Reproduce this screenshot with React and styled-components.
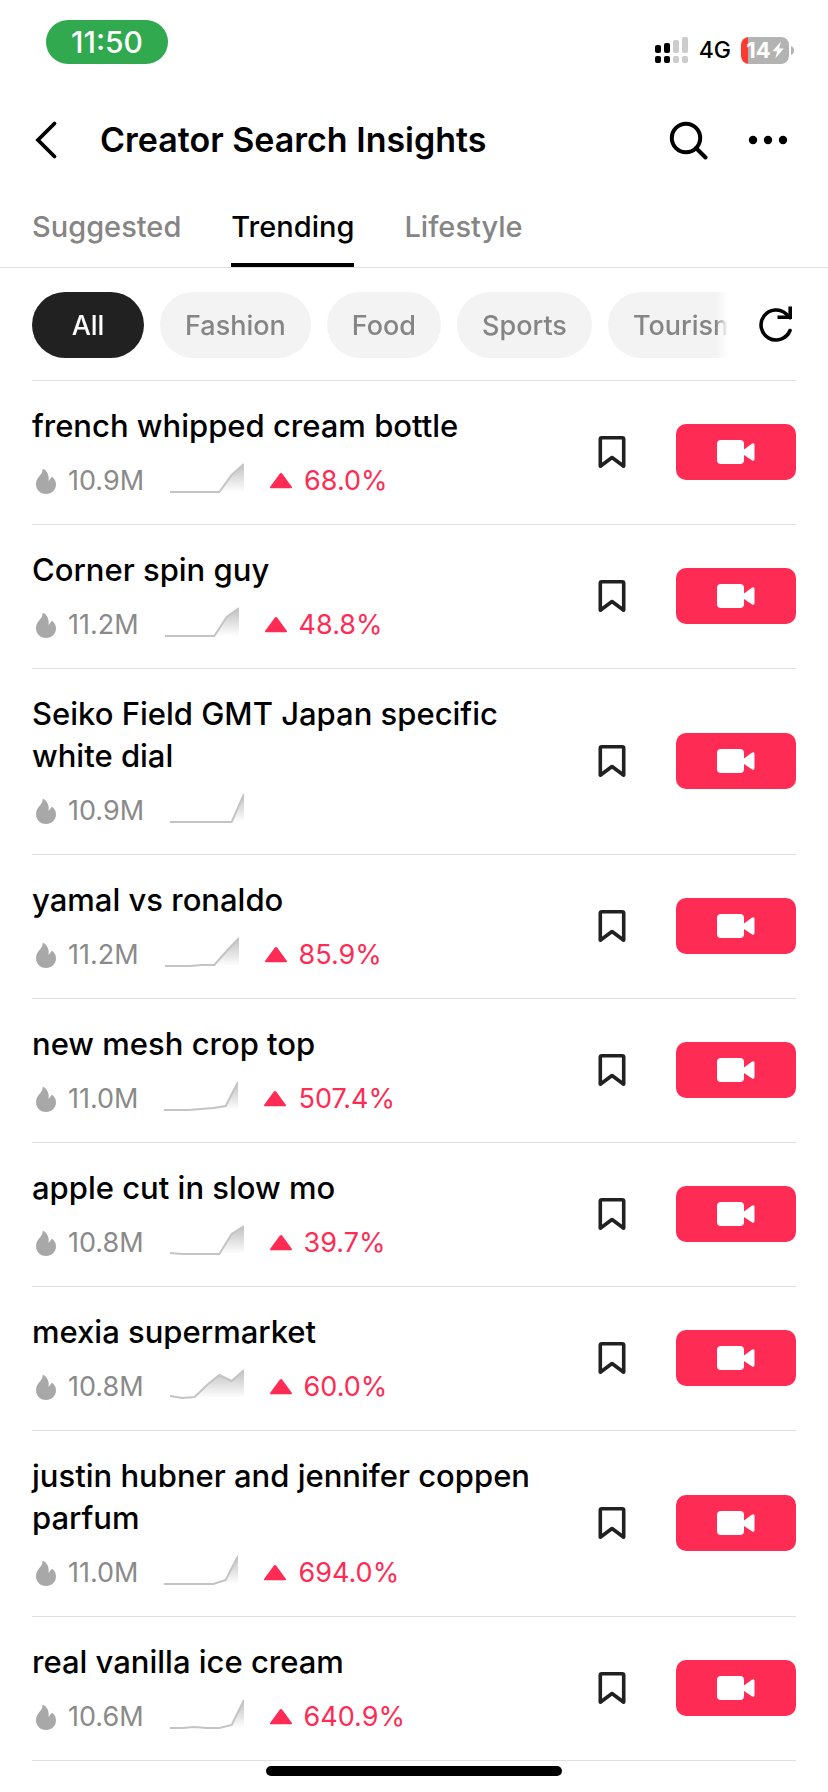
import React, { useId } from "react";
import styled, { createGlobalStyle } from "styled-components";

const GlobalStyle = createGlobalStyle`
  *, *::before, *::after { box-sizing: border-box; }
  body {
    margin: 0;
    background: #fff;
    color: #000;
    font-family: Inter, "Liberation Sans", sans-serif;
  }
  button { font: inherit; color: inherit; border: 0; background: none; padding: 0; cursor: pointer; }
  svg { display: block; flex: none; }
`;

const Page = styled.div`
  min-height: 100vh;
  background: #fff;
`;

const StatusBar = styled.div`
  display: flex;
  justify-content: space-between;
  align-items: flex-start;
  height: 96px;
  padding: 20px 34px 0 46px;
`;

const Clock = styled.time`
  width: 122px;
  height: 44px;
  border-radius: 22px;
  background: #30a94f;
  color: #fff;
  font-size: 30px;
  font-weight: 500;
  line-height: 44px;
  text-align: center;
`;

const StatusIcons = styled.div`
  display: flex;
  align-items: center;
  gap: 10px;
  height: 28px;
  margin-top: 16px;
`;

const Network = styled.span`
  font-size: 23px;
  font-weight: 500;
  line-height: 28px;
`;

const Battery = styled.div`
  display: flex;
  align-items: center;
  gap: 2px;
`;

const BatteryBody = styled.div`
  display: flex;
  align-items: center;
  justify-content: center;
  gap: 1px;
  width: 48px;
  height: 27px;
  border-radius: 8px;
  background: linear-gradient(to right, #ff3b30 7px, #b3b3b3 7px);
  color: #fff;
  font-size: 22px;
  font-weight: 700;
  line-height: 27px;
`;

const Header = styled.header`
  display: flex;
  align-items: center;
  height: 88px;
  padding: 0 40px 0 32px;
`;

const IconButton = styled.button`
  display: flex;
  align-items: center;
  justify-content: center;
  flex: none;
  width: ${(p) => p.$size}px;
  height: ${(p) => p.$size}px;
`;

const Title = styled.h1`
  flex: 1;
  margin: 0 0 0 40px;
  font-size: 34px;
  font-weight: 600;
  line-height: 44px;
`;

const HeaderActions = styled.div`
  display: flex;
  gap: 40px;
`;

const Tabs = styled.nav`
  display: flex;
  gap: 50px;
  height: 84px;
  padding: 0 32px;
  border-bottom: 1px solid #e0e0e0;
`;

const Tab = styled.button`
  height: 83px;
  padding-top: 6px;
  border-bottom: 4px solid ${(p) => (p.$active ? "#000" : "transparent")};
  color: ${(p) => (p.$active ? "#000" : "#858585")};
  font-size: 29px;
  font-weight: 500;
`;

const FilterBar = styled.div`
  display: flex;
  align-items: center;
  margin: 0 32px;
  height: 113px;
  padding-top: 2px;
  border-bottom: 1px solid #e0e0e0;
`;

const Chips = styled.div`
  display: flex;
  flex: 1;
  gap: 16px;
  min-width: 0;
  overflow: hidden;
  mask-image: linear-gradient(to right, #000 calc(100% - 12px), transparent);
`;

const Chip = styled.button`
  flex: none;
  min-width: 112px;
  height: 66px;
  padding: 0 25px;
  border-radius: 33px;
  background: ${(p) => (p.$active ? "#212121" : "#f3f3f3")};
  color: ${(p) => (p.$active ? "#fff" : "#858585")};
  font-size: 27px;
  font-weight: 500;
`;

const Refresh = styled(IconButton)`
  margin-left: 28px;
`;

const List = styled.ul`
  list-style: none;
  margin: 0;
  padding: 0 32px;
`;

const Row = styled.li`
  display: flex;
  align-items: center;
  padding: 24px 0 25px;
  border-bottom: 1px solid #e0e0e0;
`;

const Info = styled.div`
  flex: 1;
  min-width: 0;
  padding-right: 40px;
`;

const Term = styled.h2`
  margin: 0;
  font-size: 31px;
  font-weight: 500;
  line-height: 42px;
`;

const Meta = styled.div`
  display: flex;
  align-items: center;
  height: 36px;
  margin-top: 16px;
  padding-left: 4px;
  font-size: 27px;
  line-height: 36px;
`;

const Volume = styled.span`
  margin: 0 26px 0 12px;
  color: #8a8a8a;
`;

const Growth = styled.span`
  display: flex;
  align-items: center;
  gap: 12px;
  margin-left: 26px;
  color: #fe2c55;
`;

const RecordButton = styled.button`
  display: flex;
  align-items: center;
  justify-content: center;
  flex: none;
  width: 120px;
  height: 56px;
  margin-left: 40px;
  border-radius: 10px;
  background: #fe2c55;
`;

const HomeIndicator = styled.div`
  position: fixed;
  bottom: 16px;
  left: 50%;
  width: 296px;
  height: 10px;
  margin-left: -148px;
  border-radius: 5px;
  background: #000;
`;

const signalBars = [
  { top: 8, on: true },
  { top: 6, on: true },
  { top: 3, on: false },
  { top: 0, on: false },
];

const Signal = () => (
  <svg width="34" height="27" viewBox="0 0 34 27" aria-hidden="true">
    {signalBars.map(({ top, on }, i) => (
      <g key={i} fill={on ? "#000" : "#ccc"}>
        <rect x={i * 9} y={top} width="6" height={16 - top} rx="2" />
        <rect x={i * 9} y="19" width="6" height="7" rx="2" />
      </g>
    ))}
  </svg>
);

const Bolt = () => (
  <svg width="12" height="18" viewBox="0 0 12 18" aria-hidden="true">
    <path d="M9 0.5 0.5 10.2h4.7L3.2 17.5 11.7 7.4H7z" fill="#fff" />
  </svg>
);

const BatteryTip = () => (
  <svg width="3" height="9" viewBox="0 0 3 9" aria-hidden="true">
    <path d="M0 0c4 1.500 4 7.500 0 9z" fill="#b3b3b3" />
  </svg>
);

const BackIcon = () => (
  <svg width="28" height="40" viewBox="0 0 28 40" fill="none" stroke="#000" strokeWidth="3.800" aria-hidden="true">
    <path d="M22.500 3.500 6 20l16.500 16.500" strokeLinecap="round" />
  </svg>
);

const SearchIcon = () => (
  <svg width="40" height="40" viewBox="0 0 40 40" fill="none" stroke="#000" strokeWidth="4" aria-hidden="true">
    <circle cx="18" cy="18" r="14.200" />
    <path d="M28 28l9.500 9.500" strokeLinecap="round" />
  </svg>
);

const MoreIcon = () => (
  <svg width="40" height="40" viewBox="0 0 40 40" aria-hidden="true">
    <circle cx="5" cy="20" r="4.200" />
    <circle cx="20" cy="20" r="4.200" />
    <circle cx="35" cy="20" r="4.200" />
  </svg>
);

const RefreshIcon = () => (
  <svg width="40" height="40" viewBox="0 0 40 40" fill="none" stroke="#000" strokeWidth="3.600" aria-hidden="true">
    <path d="M34 25.500A15 15 0 1 1 30.500 9.200l3.500 3.500" strokeLinecap="round" />
    <path d="M34.200 1.500v10.800H21.500" />
  </svg>
);

const Flame = () => (
  <svg width="20" height="25" viewBox="0 0 20 25" fill="#a8a8a8" aria-hidden="true">
    <path d="M7.300 0c-.6 0-.9.400-.8 1C7 5.200 0 8 0 15.300 0 21 4.400 25 10 25s10-4 10-9.700c0-2.800-1.200-5.200-3-6.900-.6-.6-1.200-.5-1.700 0L12.500 12C13.400 6.500 11.200 1.800 7.300 0z" />
  </svg>
);

const Triangle = () => (
  <svg width="22" height="16" viewBox="0 0 22 16" fill="#fe2c55" aria-hidden="true">
    <path d="M9.700.7 .4 13.500C-.4 14.700 0 15.300 1.200 15.300h19.600c1.200 0 1.600-.6.8-1.800L12.300.7c-.7-.9-1.900-.9-2.600 0z" />
  </svg>
);

const BookmarkIcon = () => (
  <svg width="32" height="36" viewBox="0 0 32 36" fill="none" stroke="#212121" strokeWidth="3.600" strokeLinejoin="round" aria-hidden="true">
    <path d="M4.300 5.300q0-1.500 1.500-1.500h20.400q1.500 0 1.500 1.500v26.900L16 23.500 4.300 32.200z" />
  </svg>
);

const CameraIcon = () => (
  <svg width="38" height="24" viewBox="0 0 38 24" fill="#fff" aria-hidden="true">
    <rect width="27" height="24" rx="4" />
    <path d="M27 9.500 34.800 3.800Q37.500 2.200 37.500 5v14q0 2.800-2.700 1.200L27 15z" />
  </svg>
);

/* Seven-point trend line; values are heights above the baseline. */
const Sparkline = ({ values }) => {
  const id = useId();
  const points = values.map((v, i) => `${(i * 74) / (values.length - 1)},${29 - v}`);
  return (
    <svg width="74" height="36" viewBox="0 0 74 36" aria-hidden="true">
      <defs>
        <linearGradient id={id} x1="0" y1="0" x2="0" y2="29" gradientUnits="userSpaceOnUse">
          <stop offset="0" stopColor="#bdbdbd" />
          <stop offset="1" stopColor="#bdbdbd" stopOpacity="0" />
        </linearGradient>
      </defs>
      <polygon points={`0,29 ${points.join(" ")} 74,29`} fill={`url(#${id})`} />
      <polyline points={points.join(" ")} fill="none" stroke="#c4c4c4" strokeWidth="2" />
    </svg>
  );
};

const tabs = ["Suggested", "Trending", "Lifestyle"];
const chips = ["All", "Fashion", "Food", "Sports", "Tourism"];
const trends = [
  { term: "french whipped cream bottle", volume: "10.9M", growth: "68.0%", values: [0, 0, 0, 0, 0, 17, 28] },
  { term: "Corner spin guy", volume: "11.2M", growth: "48.8%", values: [0, 0, 0, 0, 0, 19, 28] },
  { term: "Seiko Field GMT Japan specific white dial", volume: "10.9M", values: [0, 0, 0, 0, 0, 0, 28] },
  { term: "yamal vs ronaldo", volume: "11.2M", growth: "85.9%", values: [0, 0, 0, 1, 1, 15, 28] },
  { term: "new mesh crop top", volume: "11.0M", growth: "507.4%", values: [0, 0, 0, 1, 2, 4, 28] },
  { term: "apple cut in slow mo", volume: "10.8M", growth: "39.7%", values: [1, 0, 0, 0, 0, 20, 28] },
  { term: "mexia supermarket", volume: "10.8M", growth: "60.0%", values: [2, 0, 1, 13, 23, 17, 28] },
  { term: "justin hubner and jennifer coppen parfum", volume: "11.0M", growth: "694.0%", values: [0, 0, 0, 0, 0, 4, 28] },
  { term: "real vanilla ice cream", volume: "10.6M", growth: "640.9%", values: [0, 0, 1, 0, 0, 3, 28] },
];

export default function App() {
  return (
    <Page>
      <GlobalStyle />
      <StatusBar>
        <Clock>11:50</Clock>
        <StatusIcons>
          <Signal />
          <Network>4G</Network>
          <Battery>
            <BatteryBody>
              14
              <Bolt />
            </BatteryBody>
            <BatteryTip />
          </Battery>
        </StatusIcons>
      </StatusBar>
      <Header>
        <IconButton $size={28} aria-label="Back"><BackIcon /></IconButton>
        <Title>Creator Search Insights</Title>
        <HeaderActions>
          <IconButton $size={40} aria-label="Search"><SearchIcon /></IconButton>
          <IconButton $size={40} aria-label="More"><MoreIcon /></IconButton>
        </HeaderActions>
      </Header>
      <Tabs>
        {tabs.map((t) => (
          <Tab key={t} $active={t === "Trending"}>{t}</Tab>
        ))}
      </Tabs>
      <FilterBar>
        <Chips>
          {chips.map((c) => (
            <Chip key={c} $active={c === "All"}>{c}</Chip>
          ))}
        </Chips>
        <Refresh $size={40} aria-label="Refresh"><RefreshIcon /></Refresh>
      </FilterBar>
      <List>
        {trends.map(({ term, volume, growth, values }) => (
          <Row key={term}>
            <Info>
              <Term>{term}</Term>
              <Meta>
                <Flame />
                <Volume>{volume}</Volume>
                <Sparkline values={values} />
                {growth && (
                  <Growth>
                    <Triangle />
                    {growth}
                  </Growth>
                )}
              </Meta>
            </Info>
            <IconButton $size={48} aria-label={`Save ${term}`}><BookmarkIcon /></IconButton>
            <RecordButton aria-label={`Record ${term}`}><CameraIcon /></RecordButton>
          </Row>
        ))}
      </List>
      <HomeIndicator />
    </Page>
  );
}
